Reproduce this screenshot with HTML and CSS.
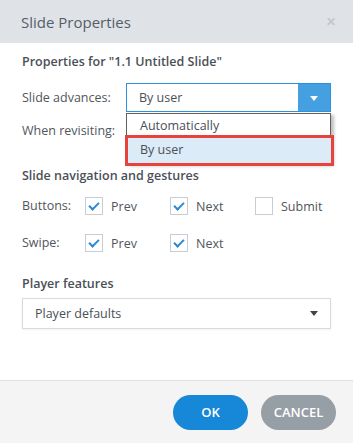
FILE: index.html
```html
<!DOCTYPE html>
<html lang="en">
<head>
  <meta charset="UTF-8" />
  <meta name="viewport" content="width=device-width, initial-scale=1.0"/>
  <title>Slide Properties</title>
  <link rel="stylesheet" href="styles.css">
</head>
<body>
  <div class="dialog">
    <div class="header">
      <h1>Slide Properties</h1>
      <span class="close">&#x2715;</span>
    </div>

    <div class="content">
      <h2 class="first">Properties for "1.1 Untitled Slide"</h2>

      <div class="row">
        <label>Slide advances:</label>
        <div class="select active">
          <span>By user</span>
          <span class="btn"><span class="caret white"></span></span>
          <ul class="list">
            <li>Automatically</li>
            <li class="selected">By user</li>
          </ul>
        </div>
      </div>

      <div class="row">
        <label>When revisiting:</label>
        <div class="select"><span></span></div>
      </div>

      <h2>Slide navigation and gestures</h2>

      <div class="checks">
        <span class="label">Buttons:</span>
        <span class="check"><span class="box on"></span>Prev</span>
        <span class="check"><span class="box on"></span>Next</span>
        <span class="check"><span class="box"></span>Submit</span>
      </div>

      <div class="checks">
        <span class="label">Swipe:</span>
        <span class="check"><span class="box on"></span>Prev</span>
        <span class="check"><span class="box on"></span>Next</span>
      </div>

      <h2 class="player">Player features</h2>
      <div class="select wide">
        <span>Player defaults</span>
        <span class="caret"></span>
      </div>
    </div>

    <div class="footer">
      <button class="ok">OK</button>
      <button class="cancel">CANCEL</button>
    </div>
  </div>
</body>
</html>
```

FILE: styles.css
```css
body {
  margin: 0;
  font-family: "Open Sans", "Noto Sans", sans-serif;
  font-size: 12.5px;
  color: #50565c;
  background: white;
}
.dialog {
  width: 353px;
  height: 443px;
  display: flex;
  flex-direction: column;
}
.header {
  height: 43px;
  background: #dfe3e7;
  display: flex;
  align-items: center;
  justify-content: space-between;
  padding: 0 17px 0 21px;
  box-sizing: border-box;
}
.header h1 {
  margin: 0;
  font-size: 15px;
  font-weight: normal;
  color: #555e68;
}
.close {
  color: #c3c7cb;
  font-size: 12px;
  font-weight: bold;
}
.content {
  flex: 1;
  padding: 10px 22px 0 22px;
}
h2 {
  margin: 22px 0 0 0;
  font-size: 12.5px;
  font-weight: 600;
  line-height: 18px;
  color: #4a5057;
}
h2.first {
  margin-top: 0;
}
h2.player {
  margin-top: 23px;
}
.row {
  display: flex;
  align-items: center;
  margin-top: 4px;
}
.row:first-of-type {
  margin-top: 12px;
}
.row label {
  width: 104px;
  flex: none;
}
.select {
  position: relative;
  flex: 1;
  height: 29px;
  box-sizing: border-box;
  border: 1px solid #d6dbe0;
  display: flex;
  align-items: center;
  padding-left: 12px;
  color: #4a5057;
}
.select.active {
  border-color: #2f90db;
}
.select .btn {
  position: absolute;
  top: 0;
  right: 0;
  bottom: 0;
  width: 32px;
  background: #44a0e0;
  display: flex;
  align-items: center;
  justify-content: center;
}
.caret {
  width: 0;
  height: 0;
  border-left: 4px solid transparent;
  border-right: 4px solid transparent;
  border-top: 5px solid #444;
}
.caret.white {
  border-top-color: white;
  margin-top: 2px;
}
.list {
  position: absolute;
  left: -1px;
  right: -1px;
  top: 29px;
  margin: 0;
  padding: 0;
  list-style: none;
  background: white;
  border: 1px solid #5f5f5f;
  border-bottom: none;
  box-shadow: 3px 2px 3px rgba(0, 0, 0, 0.25);
  z-index: 2;
}
.list li {
  height: 22px;
  line-height: 22px;
  padding-top: 1px;
  box-sizing: border-box;
  padding-left: 13px;
}
.list li.selected {
  position: relative;
  height: 28px;
  line-height: 26px;
  padding-top: 0;
  margin-left: -1px;
  margin-right: -1px;
  padding-left: 14px;
  background: #dcebf8;
  border-top: 1px solid #9cc7ea;
  border-bottom: 1px solid #9cc7ea;
}
.list li.selected::after {
  content: "";
  position: absolute;
  left: -1px;
  right: -3px;
  top: -2px;
  bottom: -3px;
  border: 3px solid #e8423d;
}
.checks {
  display: flex;
  align-items: center;
  margin-top: 12px;
}
.checks + .checks {
  margin-top: 19px;
}
.checks .label {
  width: 63px;
  flex: none;
  margin-top: -2px;
}
.check {
  width: 85px;
  flex: none;
  display: flex;
  align-items: center;
  gap: 8px;
  color: #50565c;
}
.box {
  width: 18px;
  height: 18px;
  box-sizing: border-box;
  border: 1px solid #c6cdd4;
  position: relative;
}
.box.on::after {
  content: "";
  position: absolute;
  left: 5px;
  top: 2px;
  width: 4px;
  height: 8px;
  border-right: 2px solid #2a8ad6;
  border-bottom: 2px solid #2a8ad6;
  transform: rotate(45deg);
}
.select.wide {
  margin-top: 5px;
  height: 31px;
  padding-left: 12px;
  padding-right: 12px;
  justify-content: space-between;
  box-shadow: 0 1px 2px rgba(0, 0, 0, 0.06);
}
.footer {
  height: 63px;
  box-sizing: border-box;
  border-top: 1px solid #dde2e7;
  background: #f4f4f4;
  display: flex;
  justify-content: flex-end;
  align-items: center;
  gap: 13px;
  padding: 0 17px 0 0;
}
button {
  width: 75px;
  height: 35px;
  border: none;
  border-radius: 18px;
  color: white;
  font-family: "Open Sans", "Noto Sans", sans-serif;
  font-size: 13px;
  font-weight: 600;
}
.ok {
  background: #1787d8;
}
.cancel {
  background: #969ea6;
}
```
